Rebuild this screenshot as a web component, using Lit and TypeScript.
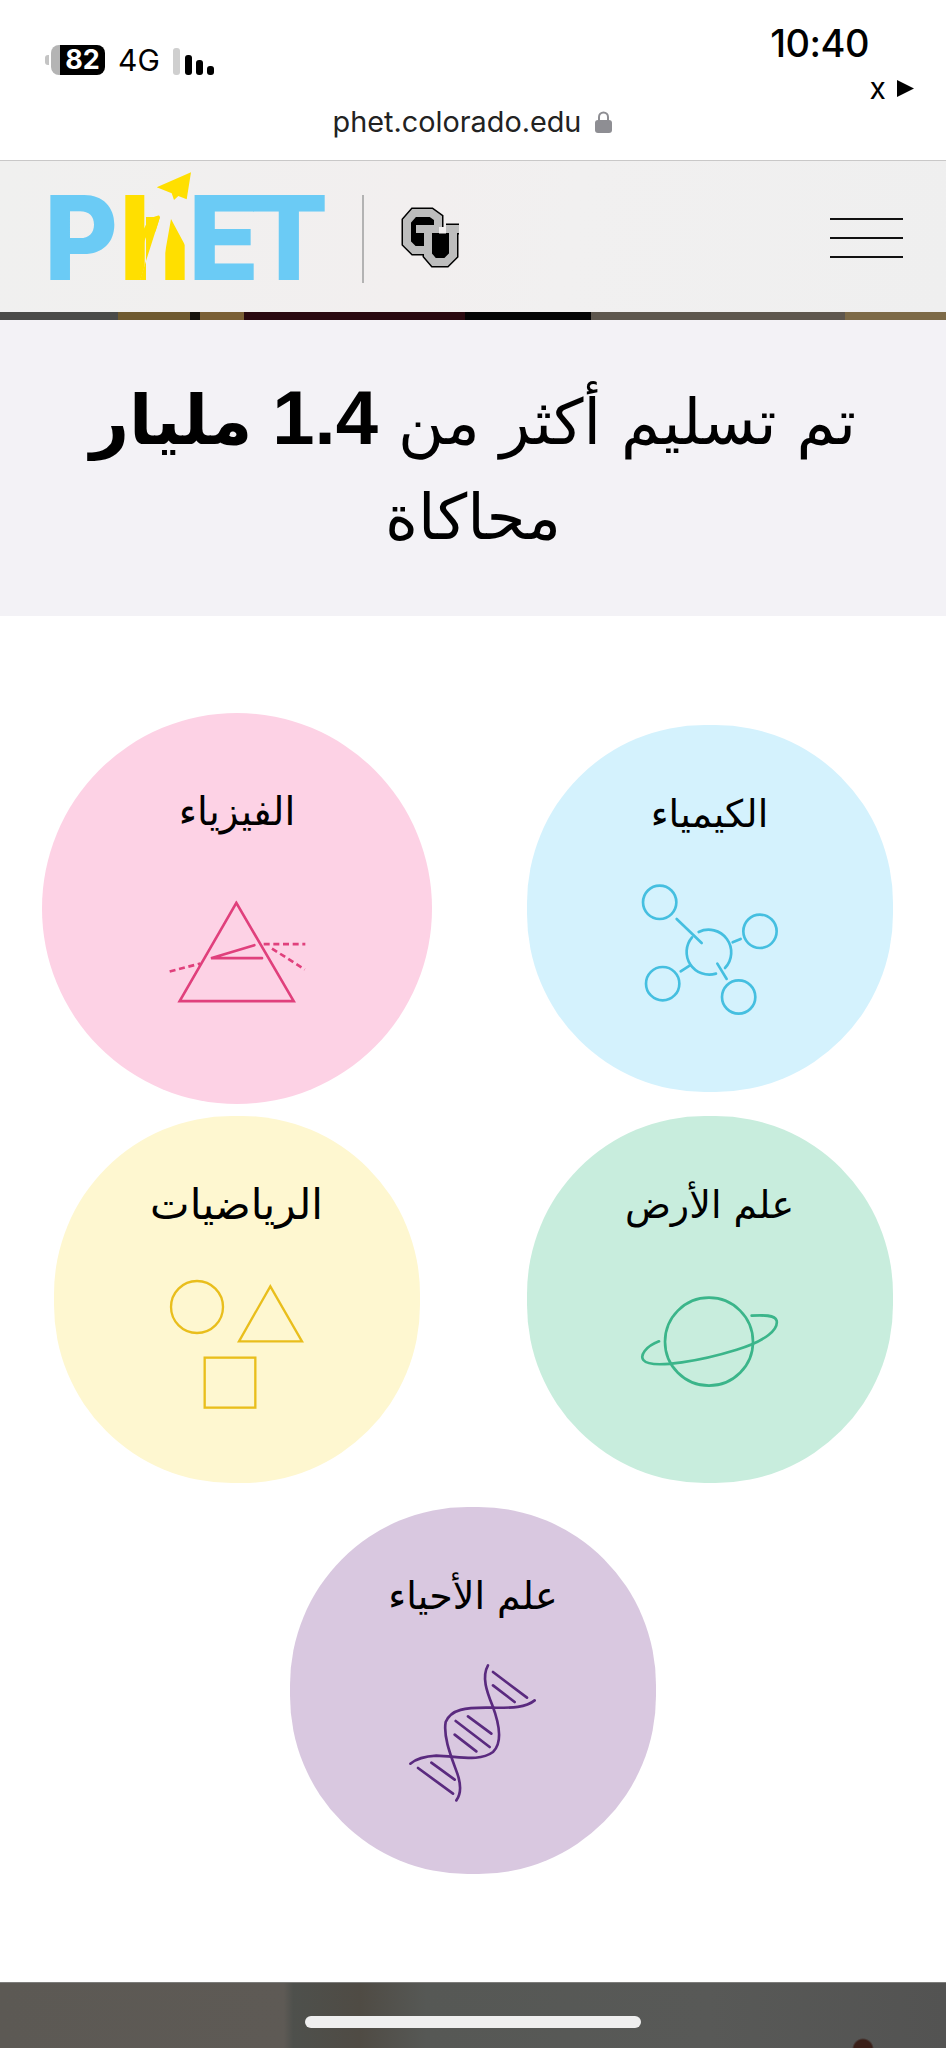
import { LitElement, html, css, svg } from 'lit';
import { customElement } from 'lit/decorators.js';
import { classMap } from 'lit/directives/class-map.js';

const ICONS = {
  chemistry: svg`
    <g fill="none" stroke="#45bfe0" stroke-width="8" stroke-linecap="round">
      <circle cx="449" cy="578" r="50" />
      <circle cx="750" cy="665" r="50" />
      <circle cx="458" cy="822" r="50" />
      <circle cx="686" cy="862" r="50" />
      <path d="M566 667A68 68 0 0 1 645 775" />
      <path d="M618 792A68 68 0 0 1 546 683" />
      <path d="M500 628L575 700M668 698L692 688M512 785L540 767M622 762L650 808" />
    </g>`,
  physics: svg`
    <g fill="none" stroke="#e0407c" stroke-width="8" stroke-linecap="round">
      <path d="M618 605L448 900H790Z" stroke-linejoin="miter" />
      <path d="M672 732L542 771H695" />
      <path d="M418 811L510 787M700 729H825M725 742L823 805" stroke-dasharray="18 11" stroke-linecap="butt" />
    </g>`,
  math: svg`
    <g fill="none" stroke="#e9be1c" stroke-width="7">
      <circle cx="475" cy="587" r="78" />
      <path d="M695 525L790 690H601Z" />
      <rect x="498" y="739" width="152" height="150" />
    </g>`,
  earth: svg`
    <g fill="none" stroke="#3bb58a" stroke-width="8" stroke-linecap="round">
      <circle cx="597" cy="693" r="132" />
      <path d="M447 692C405 708 390 735 400 748C425 780 590 745 680 717C770 690 805 655 800 630C795 612 760 613 725 615" />
    </g>`,
  biology: svg`
    <g fill="none" stroke="#5a2a7f" stroke-width="8" stroke-linecap="round">
      <path d="M625 495C605 530 622 575 638 615C655 660 672 725 640 755C600 785 540 768 470 766C435 768 410 775 392 790" />
      <path d="M765 600C735 625 690 622 620 622C560 622 515 625 498 665C490 710 515 770 533 820C545 855 545 880 530 900" />
      <path d="M640 515L742 592M640 555L705 605M565 648L635 700M528 662L630 740M525 703L590 753M455 787L525 838M415 803L520 880" />
    </g>`,
};

const TILES = [
  { key: 'physics', label: 'الفيزياء', box: '410 598 420 310', w: 131.4, h: 97, top: 176, tone: 'pink' },
  { key: 'chemistry', label: 'الكيمياء', box: '390 520 420 400', w: 140, h: 133.3, top: 158, tone: 'blue' },
  { key: 'math', label: 'الرياضيات', box: '385 500 420 400', w: 140, h: 133.3, top: 162, tone: 'yellow' },
  { key: 'earth', label: 'علم الأرض', box: '385 550 430 290', w: 143.3, h: 96.7, top: 178, tone: 'green' },
  { key: 'biology', label: 'علم الأحياء', box: '380 485 400 425', w: 133.3, h: 141.7, top: 155, tone: 'purple' },
] as const;

@customElement('app-root')
export class AppRoot extends LitElement {
  static styles = css`
    :host {
      display: block;
      width: 946px;
      height: 2048px;
      overflow: hidden;
      position: relative;
      background: #fff;
      font-family: 'DejaVu Sans', sans-serif;
      color: #000;
    }

    .browser {
      height: 161px;
      box-sizing: border-box;
      border-bottom: 1px solid #c9c8c8;
      background: #fff;
      font-family: Inter, 'Liberation Sans', sans-serif;
    }

    .status {
      display: flex;
      justify-content: space-between;
      align-items: flex-start;
      padding: 0 32px 0 45px;
      height: 106px;
    }

    .signal-group {
      display: flex;
      align-items: flex-end;
      margin-top: 45px;
      height: 30px;
    }

    .battery {
      width: 54px;
      height: 30px;
      box-sizing: border-box;
      margin-left: 6px;
      border-radius: 8px;
      background: linear-gradient(90deg, #b4b4b4 0 9px, #000 9px);
      color: #fff;
      font-size: 27px;
      font-weight: 700;
      line-height: 30px;
      padding-left: 9px;
      text-align: center;
      position: relative;
    }

    .battery::before {
      content: '';
      position: absolute;
      left: -6px;
      top: 10px;
      width: 4px;
      height: 10px;
      border-radius: 3px 0 0 3px;
      background: #c4c4c4;
    }

    .net {
      font-size: 30px;
      font-weight: 400;
      line-height: 30px;
      margin: 0 13px 0 13px;
    }

    .bars {
      display: flex;
      align-items: flex-end;
      gap: 4px;
      height: 27px;
    }

    .bars i {
      display: block;
      width: 7px;
      border-radius: 3px;
      background: #000;
    }

    .bars i.off {
      background: #cfcfcf;
      margin-right: 1px;
    }

    .clock {
      display: flex;
      flex-direction: column;
      align-items: flex-end;
    }

    .time {
      font-size: 38px;
      font-weight: 500;
      line-height: 44px;
      margin: 21px 45px 0 0;
      letter-spacing: -0.5px;
    }

    .carrier {
      display: flex;
      align-items: center;
      gap: 11px;
      font-size: 30px;
      line-height: 24px;
      margin-top: 11px;
    }

    .play {
      width: 17px;
      height: 17px;
    }

    .url {
      display: flex;
      justify-content: center;
      align-items: center;
      gap: 14px;
      font-size: 28.800px;
      line-height: 32px;
      color: #222;
      margin-left: -1px;
    }

    .lock {
      width: 17px;
      height: 22px;
    }

    .site-head {
      display: flex;
      justify-content: space-between;
      align-items: center;
      height: 151px;
      padding: 0 43px 0 40px;
      background: linear-gradient(100deg, #f0f0ef 0%, #f2efef 45%, #f1f0f0 60%, #efefef 100%);
    }

    .logo {
      display: block;
      width: 428px;
      height: 151px;
    }

    .logo text {
      font-family: Inter, 'Liberation Sans', sans-serif;
      font-weight: 800;
      font-size: 117px;
    }

    .logo .et {
      letter-spacing: -10px;
    }

    .burger {
      display: flex;
      flex-direction: column;
      gap: 17px;
      width: 73px;
      margin-top: 3px;
    }

    .burger i {
      display: block;
      height: 2px;
      background: #111;
    }

    .strip {
      height: 8px;
      background: linear-gradient(
        90deg,
        #4a4a48 0 118px,
        #6f5a30 118px 190px,
        #17130c 190px 200px,
        #7a5f35 200px 244px,
        #2a0a10 244px 465px,
        #040404 465px 591px,
        #5e574e 591px 845px,
        #7d6a48 845px
      );
    }

    .hero {
      height: 296px;
      box-sizing: border-box;
      background: #f3f2f6;
      padding: 50px 70px 0;
      text-align: center;
      direction: rtl;
      font-size: 63px;
      line-height: 95px;
    }

    .hero h1 {
      margin: 0;
      font: inherit;
    }

    .hero b {
      font-size: 68px;
      font-weight: 700;
    }

    .hero b.num {
      font-family: 'Liberation Sans', sans-serif;
      font-size: 76px;
    }

    .tiles {
      display: flex;
      flex-wrap: wrap;
      justify-content: center;
      gap: 24px 107px;
      padding: 109px 53px 108px;
      direction: ltr;
    }

    .tile {
      width: 366px;
      height: 367px;
      box-sizing: border-box;
      border-radius: 48.500%;
      position: relative;
      text-align: center;
    }

    .tile.pink {
      background: #fdd2e5;
      border-radius: 50%;
      transform: scale(1.0656);
    }

    .tile.blue { background: #d4f2fd; }
    .tile.yellow { background: #fef7d0; }
    .tile.green { background: #c8eddd; }
    .tile.purple { background: #d9c8e0; }

    .tile span {
      display: block;
      direction: rtl;
      font-size: 38px;
      line-height: 56px;
      padding-top: 61px;
    }

    .tile.pink span {
      font-size: 36.500px;
      padding-top: 65px;
    }

    .tile.yellow span {
      font-size: 42px;
    }

    .tile svg {
      position: absolute;
      left: 50%;
      transform: translateX(-50%);
    }

    .foot {
      height: 66px;
      border-top: 1px solid #7d7d7b;
      box-sizing: border-box;
      background:
        radial-gradient(circle at 863px 66px, #3a1f18 0 9px, transparent 11px),
        linear-gradient(90deg, #5c5954 0%, #5e5a55 30%, #4e504c 31%, #4f4b44 38%, #565855 45%, #585957 75%, #535352 100%);
      display: flex;
      justify-content: center;
      padding-top: 33px;
    }

    .home {
      width: 336px;
      height: 12px;
      border-radius: 6px;
      background: #efefef;
    }
  `;

  render() {
    return html`
      <div class="browser">
        <div class="status">
          <div class="signal-group">
            <div class="battery">82</div>
            <div class="net">4G</div>
            <div class="bars">
              <i class="off" style="height:27px"></i>
              <i style="height:20px"></i>
              <i style="height:15px"></i>
              <i style="height:9px"></i>
            </div>
          </div>
          <div class="clock">
            <div class="time">10:40</div>
            <div class="carrier">
              x
              <svg class="play" viewBox="0 0 17 17"><path d="M0 0L17 8.5L0 17Z" fill="#000" /></svg>
            </div>
          </div>
        </div>
        <div class="url">
          phet.colorado.edu
          <svg class="lock" viewBox="0 0 17 22">
            <path d="M4 10V6a4.500 4.500 0 0 1 9 0v4" fill="none" stroke="#8e8e93" stroke-width="2" />
            <rect y="9" width="17" height="13" rx="3" fill="#8e8e93" />
          </svg>
        </div>
      </div>

      <header class="site-head">
        <svg class="logo" viewBox="40 161 428 151">
          <text x="44" y="280" fill="#6bcbf5" textLength="74" lengthAdjust="spacingAndGlyphs">P</text>
          <text x="119" y="280" fill="#ffdf00" textLength="72" lengthAdjust="spacingAndGlyphs">h</text>
          <!-- the slit that turns the h into the PhET figure -->
          <path d="M160 217L140 281H165V253L171 219L186 247L195 200H150Z" fill="#f1efef" />
          <path d="M146 217H160L140 280H146Z" fill="#ffdf00" />
          <path d="M191 172.300L156.700 187.300L171.700 193.300L174 200L178.300 196L186.700 199.300Z" fill="#ffdf00" />
          <text class="et" x="188" y="280" fill="#6bcbf5">ET</text>
          <rect x="362" y="195" width="2" height="88" fill="#b3b3b3" />
          <g fill="none" stroke-linejoin="miter">
            <path d="M438 227V218L431 213H414L407 221V243L414 250H424" stroke="#000" stroke-width="11" />
            <path d="M416 229H439M428 229V255L434 262H446L453 255V229M446 229H459" stroke="#000" stroke-width="11" />
            <path d="M412 218H433V245H412Z" fill="#000" stroke="#000" />
            <path d="M432 234H448V257H432Z" fill="#000" stroke="#000" />
            <path d="M438 227V218L431 213H414L407 221V243L414 250H424" stroke="#bdbdbd" stroke-width="8" />
            <path d="M416 229H439M428 229V255L434 262H446L453 255V229M446 229H459" stroke="#bdbdbd" stroke-width="8" />
          </g>
        </svg>
        <div class="burger"><i></i><i></i><i></i></div>
      </header>
      <div class="strip"></div>

      <section class="hero">
        <h1>تم تسليم أكثر من <b class="num">1.4</b> <b>مليار</b> محاكاة</h1>
      </section>

      <section class="tiles">
        ${TILES.map(
          (t) => html`
            <a class=${classMap({ tile: true, [t.tone]: true })}>
              <span>${t.label}</span>
              <svg viewBox=${t.box} width=${t.w} height=${t.h} style="top:${t.top}px">${ICONS[t.key]}</svg>
            </a>
          `,
        )}
      </section>

      <footer class="foot"><div class="home"></div></footer>
    `;
  }
}
